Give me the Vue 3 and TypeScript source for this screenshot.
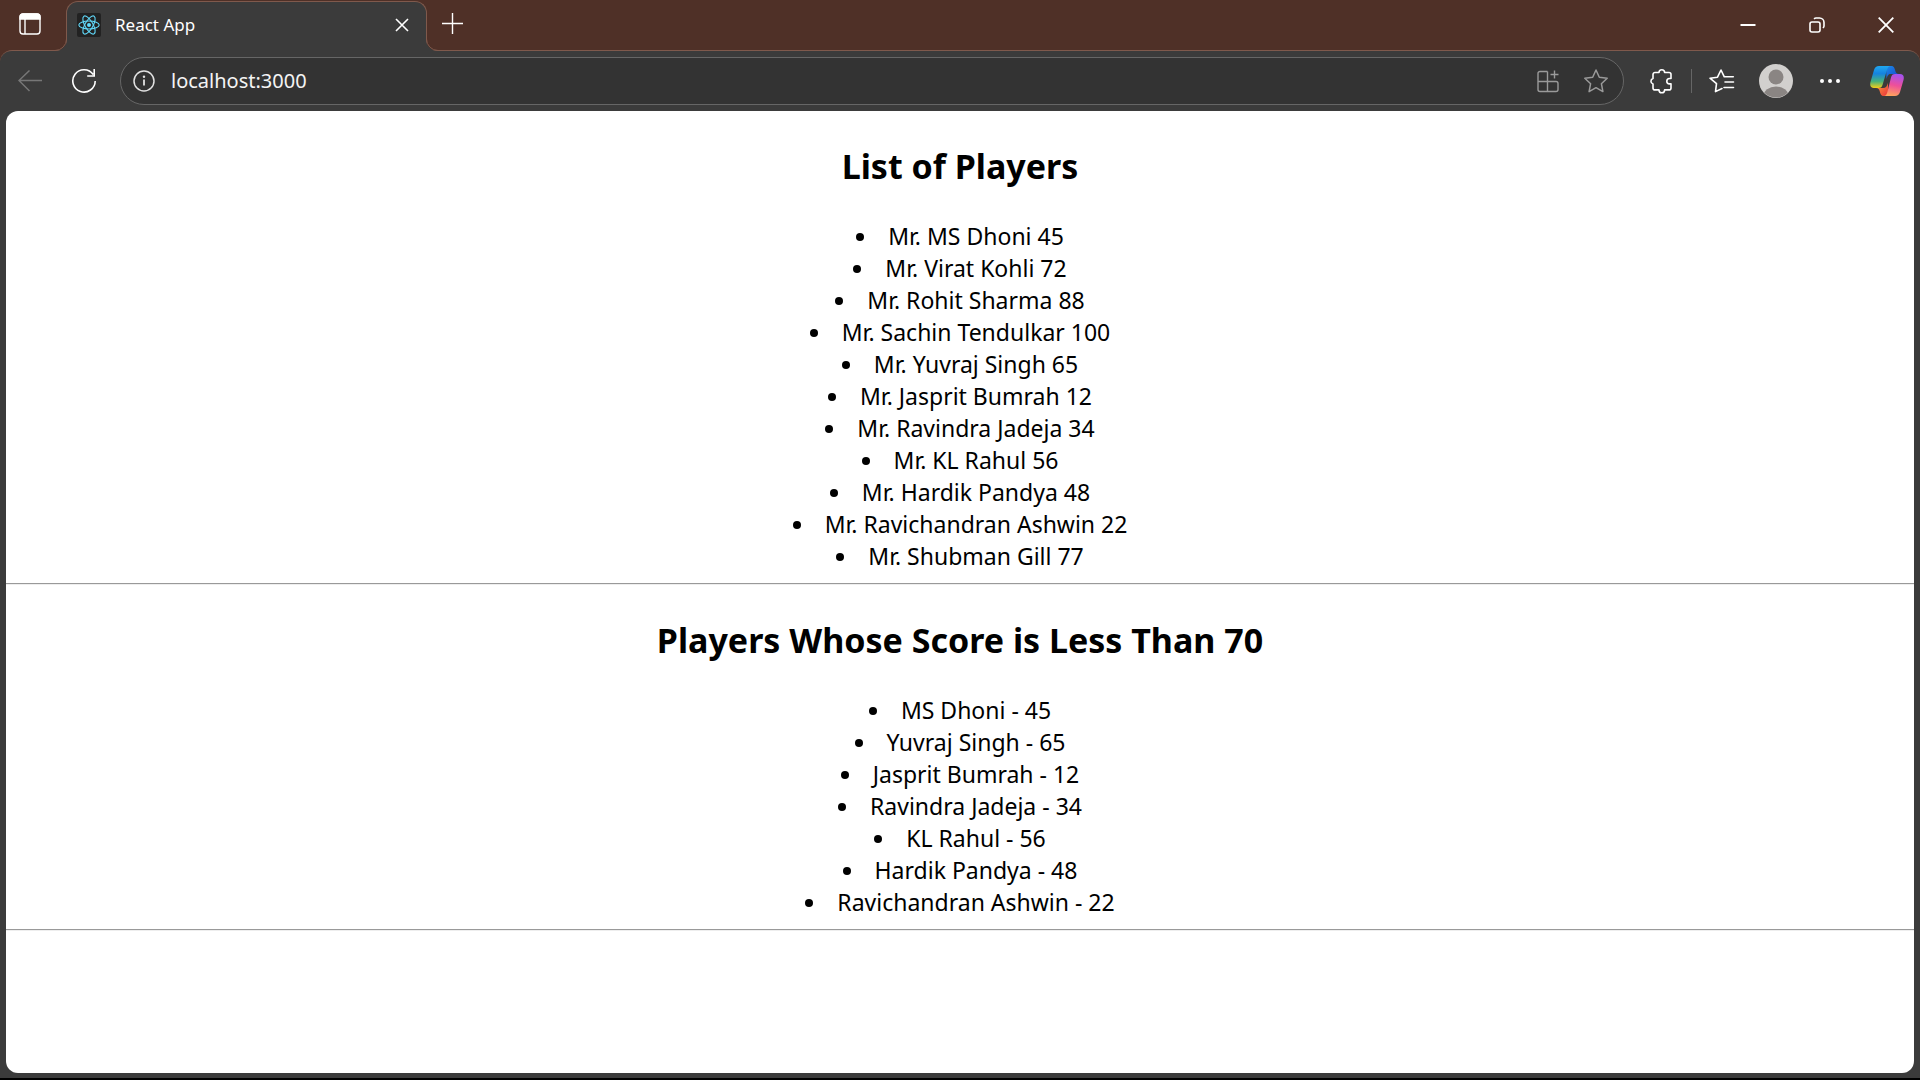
<script setup lang="ts">
import { ref } from 'vue'

interface Player {
  name: string
  score: number
}

const address = ref('localhost:3000')

const players: Player[] = [
  { name: 'MS Dhoni', score: 45 },
  { name: 'Virat Kohli', score: 72 },
  { name: 'Rohit Sharma', score: 88 },
  { name: 'Sachin Tendulkar', score: 100 },
  { name: 'Yuvraj Singh', score: 65 },
  { name: 'Jasprit Bumrah', score: 12 },
  { name: 'Ravindra Jadeja', score: 34 },
  { name: 'KL Rahul', score: 56 },
  { name: 'Hardik Pandya', score: 48 },
  { name: 'Ravichandran Ashwin', score: 22 },
  { name: 'Shubman Gill', score: 77 },
]

const below70 = players.filter((p) => p.score < 70)
</script>

<template>
  <div class="window">
    <header class="titlebar">
      <button class="workspaces" type="button" aria-label="Tab actions">
        <svg width="22" height="22" viewBox="0 0 22 22" fill="none" stroke="#fff" stroke-width="1.4">
          <rect x="1" y="1" width="20" height="20" rx="3" />
          <path d="M1 6V4a3 3 0 0 1 3-3h14a3 3 0 0 1 3 3v2z" fill="#fff" />
          <path d="M6 6v15" />
        </svg>
      </button>
      <div class="tab">
        <svg class="flare flare-left" width="12" height="12" viewBox="0 0 12 12">
          <path d="M0 12A12 12 0 0 0 12 0V12z" fill="#3b3b3b" />
          <path d="M0 11.5A11.5 11.5 0 0 0 11.5 0" fill="none" stroke="#7f594c" />
        </svg>
        <svg class="favicon" width="24" height="24" viewBox="0 0 24 24" fill="none" stroke="#61dafb" stroke-width="1.1">
          <rect width="24" height="24" rx="2" fill="#222" stroke="none" />
          <ellipse cx="12" cy="12" rx="10.2" ry="4" />
          <ellipse cx="12" cy="12" rx="10.2" ry="4" transform="rotate(60 12 12)" />
          <ellipse cx="12" cy="12" rx="10.2" ry="4" transform="rotate(120 12 12)" />
          <circle cx="12" cy="12" r="2" fill="#61dafb" stroke="none" />
        </svg>
        <span class="tab-title">React App</span>
        <button class="tab-close" type="button" aria-label="Close tab">
          <svg width="14" height="14" viewBox="0 0 14 14" stroke="#fff" stroke-width="1.6">
            <path d="M1 1l12 12M13 1L1 13" />
          </svg>
        </button>
        <svg class="flare flare-right" width="12" height="12" viewBox="0 0 12 12">
          <path d="M12 12A12 12 0 0 1 0 0V12z" fill="#3b3b3b" />
          <path d="M12 11.5A11.5 11.5 0 0 1 .5 0" fill="none" stroke="#7f594c" />
        </svg>
      </div>
      <button class="new-tab" type="button" aria-label="New tab">
        <svg width="21" height="21" viewBox="0 0 21 21" stroke="#fff" stroke-width="1.4">
          <path d="M10.5 0v21M0 10.5h21" />
        </svg>
      </button>
      <div class="window-controls">
        <button type="button" aria-label="Minimize">
          <svg width="16" height="16" viewBox="0 0 16 16" stroke="#fff" stroke-width="2"><path d="M.5 8h15" /></svg>
        </button>
        <button type="button" aria-label="Restore">
          <svg width="16" height="16" viewBox="0 0 16 16" fill="none" stroke="#fff" stroke-width="1.6">
            <rect x="1" y="5" width="10" height="10" rx="2" />
            <path d="M5 1.8Q6 1 7 1h3.500a4.500 4.500 0 0 1 4.500 4.500V9q0 1-1 2" />
          </svg>
        </button>
        <button type="button" aria-label="Close window">
          <svg width="16" height="16" viewBox="0 0 16 16" stroke="#fff" stroke-width="1.8"><path d="M.7.7l14.600 14.600M15.300.7L.7 15.300" /></svg>
        </button>
      </div>
    </header>

    <div class="frame">
      <nav class="toolbar">
        <button class="nav-button" type="button" aria-label="Back" disabled>
          <svg width="24" height="24" viewBox="0 0 24 24" fill="none" stroke="#777" stroke-width="1.5">
            <path d="M11.500 1.500L1 11.500l10.500 10.500M1 11.500h23" />
          </svg>
        </button>
        <button class="nav-button" type="button" aria-label="Refresh">
          <svg width="26" height="26" viewBox="0 0 26 26" fill="none" stroke="#fff" stroke-width="1.6">
            <path d="M22.200 6.500A11.200 11.200 0 1 0 24.200 13M23.200 1v7h-7" />
          </svg>
        </button>
        <div class="address">
          <svg width="22" height="22" viewBox="0 0 22 22" fill="none" stroke="#e2e2e2" stroke-width="1.5">
            <circle cx="11" cy="11" r="10" />
            <path d="M11 9.500v6" stroke-width="1.800" />
            <circle cx="11" cy="6.800" r="1.200" fill="#e2e2e2" stroke="none" />
          </svg>
          <input v-model="address" type="text" aria-label="Address" spellcheck="false" />
          <button type="button" aria-label="Install app">
            <svg width="24" height="24" viewBox="0 0 24 24" fill="none" stroke="#9a9a9a" stroke-width="1.400">
              <path d="M11.500 2.500H4a2 2 0 0 0-2 2V20.500a2 2 0 0 0 2 2h16a2 2 0 0 0 2-2V14.500a2 2 0 0 0-2-2H2M11.500 2.500v20M18.500 1.500v8M14.500 5.500h8" />
            </svg>
          </button>
          <button type="button" aria-label="Add to favorites">
            <svg width="26" height="26" viewBox="0 0 26 26" fill="none" stroke="#9a9a9a" stroke-width="1.500" stroke-linejoin="round">
              <path d="M13 2l3.300 7.200 7.900 1-5.800 5.500 1.500 7.900L13 19.700l-6.900 3.900 1.500-7.900-5.800-5.500 7.900-1z" />
            </svg>
          </button>
        </div>
        <button class="tool" type="button" aria-label="Extensions">
          <svg width="24" height="26" viewBox="0 0 24 26" fill="none" stroke="#fff" stroke-width="1.600" stroke-linejoin="round">
            <path d="M6 4.500h4a2.800 2.800 0 0 1 5.600 0H20a2 2 0 0 1 2 2v4h-1.500a2.700 2.700 0 0 0 0 5.400H22v4a2 2 0 0 1-2 2h-4.400a2.800 2.800 0 0 1-5.600 0H6a2 2 0 0 1-2-2v-4a2.800 2.800 0 0 1 0-5.400v-4a2 2 0 0 1 2-2z" />
          </svg>
        </button>
        <span class="divider"></span>
        <button class="tool" type="button" aria-label="Favorites">
          <svg width="26" height="26" viewBox="0 0 26 26" fill="none" stroke="#fff" stroke-width="1.600" stroke-linejoin="round" stroke-linecap="round">
            <path d="M13 20.500l-6.500 3.100 1-8L1 10.200l7.500-1L12 2l3.300 6.800h9M16 14h8.500M15 19.500h9.500" />
          </svg>
        </button>
        <button class="tool" type="button" aria-label="Profile">
          <svg width="34" height="34" viewBox="0 0 34 34">
            <defs>
              <clipPath id="avatar-clip"><circle cx="17" cy="17" r="16.500" /></clipPath>
            </defs>
            <circle cx="17" cy="17" r="17" fill="#d2d0ce" />
            <g fill="#8a8583" clip-path="url(#avatar-clip)">
              <circle cx="17" cy="13" r="7.500" />
              <ellipse cx="17" cy="32" rx="12.500" ry="9.500" />
            </g>
          </svg>
        </button>
        <button class="tool" type="button" aria-label="Settings and more">
          <svg width="22" height="6" viewBox="0 0 22 6" fill="#fff">
            <circle cx="3" cy="3" r="2" /><circle cx="11" cy="3" r="2" /><circle cx="19" cy="3" r="2" />
          </svg>
        </button>
        <button class="tool copilot" type="button" aria-label="Copilot">
          <svg width="34" height="32" viewBox="0 0 34 32">
            <defs>
              <linearGradient id="cp-left" x1="0" y1="0" x2="0" y2="1">
                <stop offset="0" stop-color="#20a8f0" /><stop offset=".35" stop-color="#1583df" />
                <stop offset=".7" stop-color="#48b27a" /><stop offset="1" stop-color="#f5cf18" />
              </linearGradient>
              <linearGradient id="cp-right" x1=".6" y1="0" x2=".4" y2="1">
                <stop offset="0" stop-color="#a552ee" /><stop offset=".5" stop-color="#ee4f9a" />
                <stop offset="1" stop-color="#ffa45c" />
              </linearGradient>
              <linearGradient id="cp-top" x1="0" y1="0" x2="1" y2="1">
                <stop offset="0" stop-color="#1b8be8" /><stop offset="1" stop-color="#1742c9" />
              </linearGradient>
              <linearGradient id="cp-bottom" x1="0" y1="0" x2="1" y2="1">
                <stop offset="0" stop-color="#ffa13a" /><stop offset="1" stop-color="#e8323c" />
              </linearGradient>
            </defs>
            <path d="M16 1h5c3 0 3.500 2 4.200 4.500.6 2 1.300 3.500 3.800 3.500h-8c-3 0-3.500 2-4.500 5z" fill="url(#cp-top)" />
            <path d="M18 31h-4c-3 0-3.500-2-4.200-4.500C9.200 24.500 8.500 23 6 23h7c3 0 4-2 5-5z" fill="url(#cp-bottom)" />
            <path d="M9 1h12c-2.500 0-3.500 2-4.200 4.500L12.500 20c-.8 2.400-2 3-4 3H4c-3 0-4.500-2-3.500-6L4 5c.8-2.700 2.500-4 5-4z" fill="url(#cp-left)" />
            <path d="M25 31H13.500c2.500 0 3.400-2 4-4.500L21 12.500c.6-2.400 1.800-3.500 4-3.500h5c3 0 4.500 2 3.500 6L30 27c-.8 2.700-2.500 4-5 4z" fill="url(#cp-right)" />
          </svg>
        </button>
      </nav>

      <main class="page">
        <h2>List of Players</h2>
        <ul>
          <li v-for="p in players" :key="p.name">Mr. {{ p.name }} {{ p.score }}</li>
        </ul>
        <hr />
        <h2>Players Whose Score is Less Than 70</h2>
        <ul>
          <li v-for="p in below70" :key="p.name">{{ p.name }} - {{ p.score }}</li>
        </ul>
        <hr />
      </main>
    </div>
  </div>
</template>

<style>
body {
  margin: 0;
  background: #000;
}
</style>

<style scoped>
.window {
  box-sizing: border-box;
  min-height: 100vh;
  display: flex;
  flex-direction: column;
  background: linear-gradient(#4f3027 80px, #3b3b3b 80px);
  border-bottom: 2px solid #000;
  font-family: "Segoe UI", "Noto Sans", "Open Sans", sans-serif;
}

button {
  display: flex;
  align-items: center;
  justify-content: center;
  padding: 0;
  border: 0;
  background: none;
}

svg {
  display: block;
  flex: none;
}

.titlebar {
  display: flex;
  height: 50px;
}

.workspaces {
  width: 60px;
  margin-right: 6px;
  height: 48px;
}

.tab {
  position: relative;
  z-index: 1;
  box-sizing: border-box;
  display: flex;
  align-items: center;
  width: 361px;
  height: 50px;
  margin-top: 1px;
  padding: 0 16px 4px 10px;
  background: #3b3b3b;
  border: 1px solid #7f594c;
  border-bottom: 0;
  border-radius: 12px 12px 0 0;
}

.flare {
  position: absolute;
  bottom: 0;
}

.flare-left {
  left: -12px;
}

.flare-right {
  right: -12px;
}

.tab-title {
  flex: 1;
  margin-left: 14px;
  color: #fff;
  font-size: 17px;
  line-height: 24px;
}

.tab-close {
  width: 16px;
  height: 24px;
}

.new-tab {
  width: 50px;
  height: 46px;
}

.window-controls {
  display: flex;
  margin-left: auto;
}

.window-controls button {
  width: 69px;
}

.frame {
  flex: 1;
  display: flex;
  flex-direction: column;
  padding: 0 6px 5px;
  background: #3b3b3b;
  border-top: 1px solid #7f594c;
  border-radius: 12px 12px 0 0;
}

.toolbar {
  display: flex;
  align-items: center;
  height: 60px;
  margin-right: -3px;
}

.nav-button {
  width: 48px;
  height: 48px;
}

.nav-button + .nav-button {
  margin-left: 6px;
}

.address {
  flex: 1;
  box-sizing: border-box;
  display: flex;
  align-items: center;
  height: 48px;
  margin: 0 10px 0 12px;
  padding: 0 14px 0 12px;
  background: #333;
  border: 1px solid #666;
  border-radius: 24px;
}

.address input {
  flex: 1;
  min-width: 0;
  margin-left: 16px;
  padding: 0;
  border: 0;
  outline: 0;
  background: none;
  color: #f4f4f4;
  font: 20px/28px "Segoe UI", "Noto Sans", "Open Sans", sans-serif;
}

.address button {
  width: 26px;
  margin-left: 22px;
}

.tool {
  width: 54px;
  height: 48px;
}

.copilot {
  width: 60px;
}

.divider {
  width: 1px;
  height: 24px;
  margin: 0 3px;
  background: #666;
}

.page {
  flex: 1;
  background: #fff;
  border-radius: 12px;
  color: #000;
  text-align: center;
}

h2 {
  margin: 0;
  padding: 31px 0 30px;
  font-size: 34px;
  font-weight: 700;
  line-height: 48px;
}

ul {
  margin: 0;
  padding: 0;
  list-style: disc inside;
  font-size: 23px;
  line-height: 32px;
}

hr {
  height: 0;
  margin: 11px 0 0;
  border: 0;
  border-top: 1px solid #999;
  border-bottom: 1px solid #eee;
}
</style>
